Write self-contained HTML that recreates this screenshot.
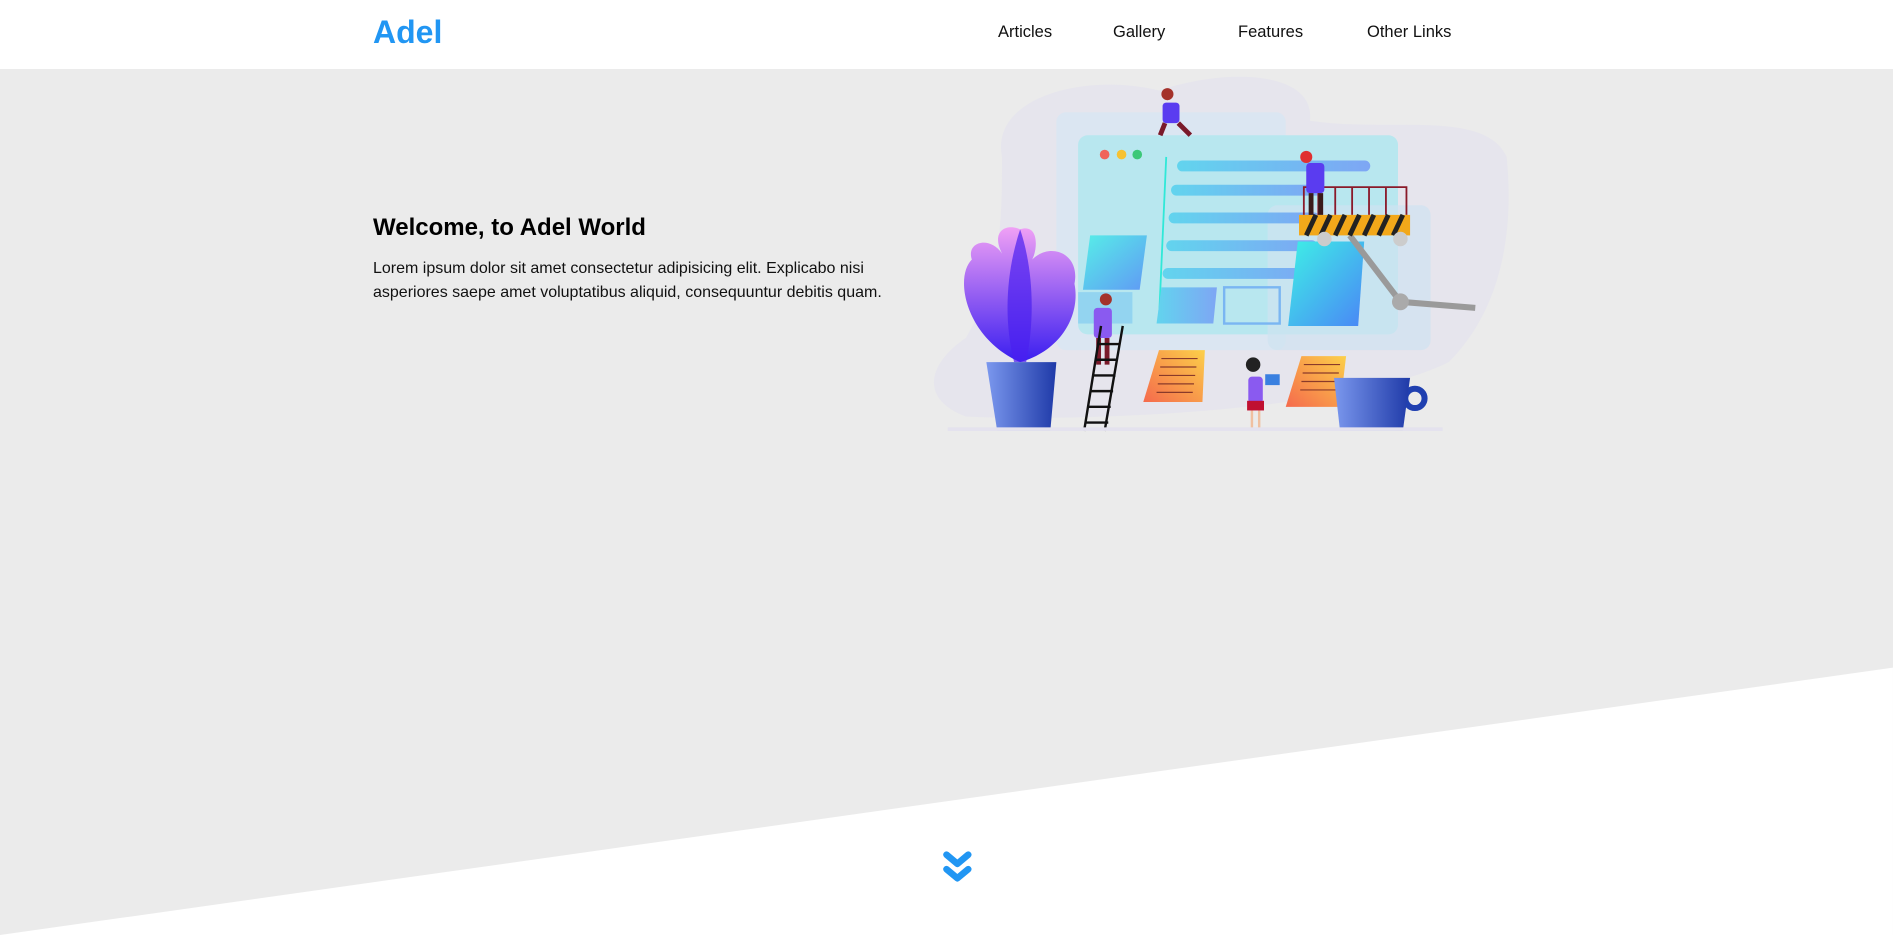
<!DOCTYPE html>
<html><head><meta charset="utf-8">
<style>
html,body{margin:0;padding:0;width:1893px;height:935px;overflow:hidden;background:#ebebeb;font-family:"Liberation Sans",Arial,sans-serif;position:relative}
header{position:absolute;left:0;top:0;width:1893px;height:69px;background:#fff}
.logo{position:absolute;left:373px;top:14px;font-size:32px;font-weight:bold;color:#2196f3}
.nav a{position:absolute;top:23px;font-size:16.5px;color:#111;text-decoration:none}
h1{position:absolute;left:373px;top:214px;margin:0;font-size:24px;font-weight:bold;color:#000}
p{position:absolute;left:373px;top:257px;margin:0;font-size:16px;line-height:24px;color:#111;white-space:nowrap}
svg{position:absolute;left:0;top:0}
</style></head><body>
<svg width="1893" height="935" viewBox="0 0 1568 774.5">
<defs>
<linearGradient id="bar" x1="0" x2="1"><stop offset="0" stop-color="#62d4ee"/><stop offset="1" stop-color="#7ea6f4"/></linearGradient>
<linearGradient id="bx" x1="0" y1="0" x2="1" y2="1"><stop offset="0" stop-color="#3ef0e6"/><stop offset="1" stop-color="#4a86f6"/></linearGradient>
<linearGradient id="leaf" x1="0" y1="0" x2="0" y2="1"><stop offset="0" stop-color="#f0a0f5"/><stop offset="1" stop-color="#3a1ef0"/></linearGradient>
<linearGradient id="note" x1="1" y1="0" x2="0" y2="1"><stop offset="0" stop-color="#fcd049"/><stop offset="1" stop-color="#f56a4c"/></linearGradient>
<linearGradient id="pot" x1="0" x2="1"><stop offset="0" stop-color="#7b98ee"/><stop offset="1" stop-color="#1f3aa8"/></linearGradient>
</defs>
<polygon points="0,774.5 1568,553 1568,774.5" fill="#fff"/>
<path d="M830,130 C820,80 900,60 960,75 C1020,55 1090,60 1085,100 C1150,110 1230,90 1248,130 C1255,200 1240,260 1200,300 C1120,340 900,350 800,345 C760,330 770,300 800,280 C830,230 830,180 830,130Z" fill="#e3e1ee" opacity=".6"/>
<rect x="875" y="93" width="190" height="197" rx="8" fill="#d8e6f2" opacity=".8"/>
<rect x="893" y="112" width="265" height="165" rx="8" fill="#b8e7ef"/>
<rect x="1050" y="170" width="135" height="120" rx="8" fill="#cfe3f1" opacity=".7"/>
<circle cx="915" cy="128" r="4" fill="#f0645a"/><circle cx="929" cy="128" r="4" fill="#f6c232"/><circle cx="942" cy="128" r="4" fill="#3cc878"/>
<line x1="966" y1="130" x2="960" y2="265" stroke="#30e8d8" stroke-width="1.5"/>
<rect x="975" y="133" width="160" height="9" rx="4.5" fill="url(#bar)"/>
<rect x="970" y="153" width="125" height="9" rx="4.5" fill="url(#bar)"/>
<rect x="968" y="176" width="125" height="9" rx="4.5" fill="url(#bar)"/>
<rect x="966" y="199" width="125" height="9" rx="4.5" fill="url(#bar)"/>
<rect x="963" y="222" width="128" height="9" rx="4.5" fill="url(#bar)"/>
<polygon points="903,195 950,195 944,240 897,240" fill="url(#bx)" opacity=".8"/>
<rect x="893" y="242" width="45" height="26" fill="#8ad0f0" opacity=".8"/>
<polygon points="962,238 1008,238 1005,268 958,268" fill="url(#bar)"/>
<rect x="1014" y="238" width="46" height="30" fill="none" stroke="#7ab6f2" stroke-width="2"/>
<polygon points="1075,200 1130,200 1125,270 1067,270" fill="url(#bx)"/>
<path d="M1118,195 L1160,250 L1222,255" stroke="#9a9a9a" stroke-width="5" fill="none"/>
<circle cx="1160" cy="250" r="7" fill="#aaa"/>
<path d="M1080,178 V155 H1165 V178 M1092,155V178 M1106,155V178 M1120,155V178 M1134,155V178 M1148,155V178" stroke="#8a1a2a" stroke-width="1.5" fill="none"/>
<rect x="1076" y="178" width="92" height="17" fill="#f2a81a"/>
<path d="M1082,195l8,-17 M1094,195l8,-17 M1106,195l8,-17 M1118,195l8,-17 M1130,195l8,-17 M1142,195l8,-17 M1154,195l8,-17" stroke="#222" stroke-width="4"/>
<circle cx="1097" cy="198" r="6" fill="#ccc"/><circle cx="1160" cy="198" r="6" fill="#ccc"/>
<rect x="963" y="85" width="14" height="17" rx="3" fill="#5a3cf0"/><circle cx="967" cy="78" r="5" fill="#a4322a"/><path d="M965,102 l-4,10 M976,102 l10,10" stroke="#7a1a2a" stroke-width="4"/>
<rect x="1082" y="135" width="15" height="25" rx="3" fill="#5a3cf0"/><circle cx="1082" cy="130" r="5" fill="#e03030"/><path d="M1086,160v18 M1094,160v18" stroke="#3a1a1a" stroke-width="4"/>
<rect x="906" y="255" width="15" height="25" rx="3" fill="#8a5af0"/><circle cx="916" cy="248" r="5" fill="#a4322a"/><path d="M910,280v22 M917,280v22" stroke="#7a1a2a" stroke-width="4"/>
<rect x="1034" y="312" width="12" height="22" rx="3" fill="#8a5af0"/><circle cx="1038" cy="302" r="6" fill="#222"/><rect x="1033" y="332" width="14" height="8" fill="#c01030"/><path d="M1037,340v15 M1043,340v15" stroke="#f0c0a0" stroke-width="2"/>
<rect x="1048" y="310" width="12" height="9" fill="#3a80e0"/>
<path d="M912,270 L898,357 M930,270 L915,357 M910,285h18 M908,298h18 M906,311h18 M904,324h18 M902,337h18 M900,350h18" stroke="#111" stroke-width="2" fill="none"/>
<path d="M845,300 C800,280 790,230 805,215 C800,200 820,195 830,210 C820,190 835,185 845,190 C860,185 860,205 855,215 C870,200 895,210 890,235 C895,260 880,290 845,300Z" fill="url(#leaf)"/>
<path d="M840,300 C830,260 835,220 845,190 C855,220 858,260 850,300Z" fill="#4a20f0" opacity=".7"/>
<polygon points="817,300 875,300 870,357 826,357" fill="url(#pot)"/>
<polygon points="960,290 998,290 996,333 947,333" fill="url(#note)"/>
<path d="M962,297h30 M961,304h30 M960,311h30 M959,318h30 M958,325h30" stroke="#8a3a2a" stroke-width="1"/>
<polygon points="1078,295 1115,295 1110,337 1065,337" fill="url(#note)"/>
<path d="M1080,302h30 M1079,309h30 M1078,316h30 M1077,323h30" stroke="#8a3a2a" stroke-width="1"/>
<circle cx="1172" cy="330" r="8" fill="none" stroke="#2040b0" stroke-width="5"/>
<polygon points="1105,313 1168,313 1162,357 1110,357" fill="url(#pot)"/>
<rect x="785" y="354" width="410" height="3" fill="#e4e2ee"/>
<path d="M784,708 l9,7.5 l9,-7.5 M784,720 l9,7.5 l9,-7.5" stroke="#2196f3" stroke-width="5.5" fill="none" stroke-linecap="round" stroke-linejoin="round"/>
</svg>
<header>
<div class="logo">Adel</div>
<div class="nav">
<a style="left:998px">Articles</a>
<a style="left:1113px">Gallery</a>
<a style="left:1238px">Features</a>
<a style="left:1367px">Other Links</a>
</div>
</header>
<h1>Welcome, to Adel World</h1>
<p>Lorem ipsum dolor sit amet consectetur adipisicing elit. Explicabo nisi<br>asperiores saepe amet voluptatibus aliquid, consequuntur debitis quam.</p>
</body></html>
